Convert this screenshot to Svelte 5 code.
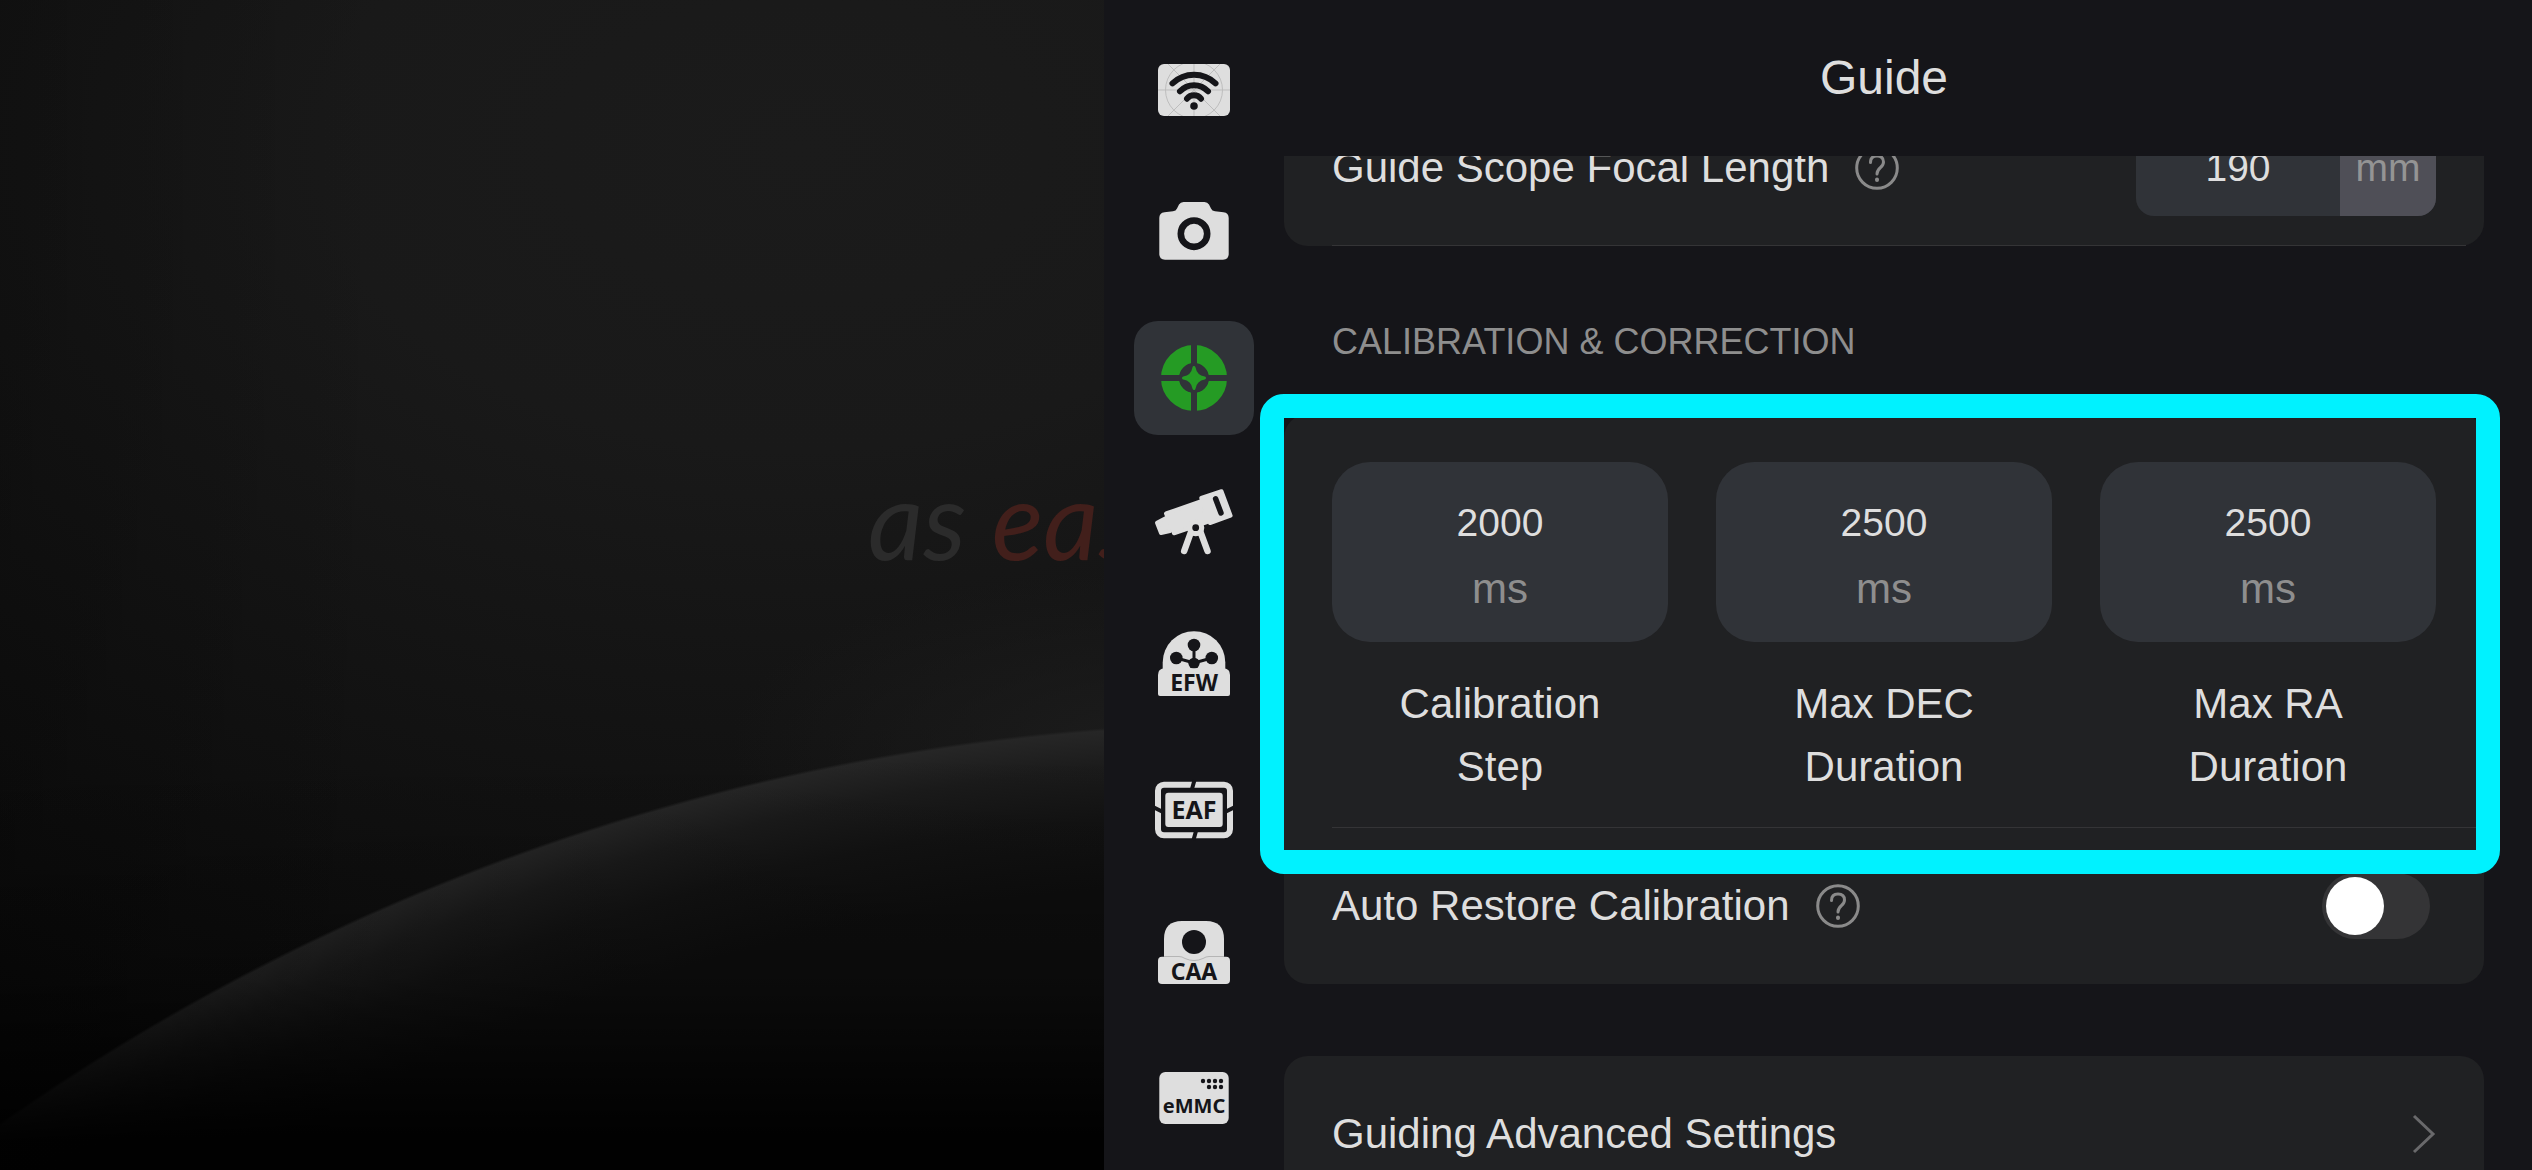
<script>
    import { onMount } from 'svelte';

    let scroller;
    let focalLength = 190;
    let autoRestore = false;
    let activeTab = 'guide';

    const tabs = [
        { id: 'wifi', label: 'Wi-Fi' },
        { id: 'camera', label: 'Main camera' },
        { id: 'guide', label: 'Guide' },
        { id: 'telescope', label: 'Telescope' },
        { id: 'efw', label: 'EFW' },
        { id: 'eaf', label: 'EAF' },
        { id: 'caa', label: 'CAA' },
        { id: 'emmc', label: 'eMMC' }
    ];

    let durations = [
        { id: 'calibration-step', value: 2000, lines: ['Calibration', 'Step'] },
        { id: 'max-dec', value: 2500, lines: ['Max DEC', 'Duration'] },
        { id: 'max-ra', value: 2500, lines: ['Max RA', 'Duration'] }
    ];

    // open with the calibration group in view
    onMount(() => {
        scroller.scrollTop = 66;
    });
</script>

<div class="shell">
    <section class="stage">
        <p class="slogan">as <span>easy</span></p>
    </section>

    <div class="panel">
        <nav>
            {#each tabs as tab (tab.id)}
                <button class="tab" class:active={activeTab === tab.id} aria-label={tab.label} on:click={() => activeTab = tab.id}>
                    <svg viewBox="0 0 84 84" class="icon">
                        {#if tab.id === 'wifi'}
                            <rect class="light" x="6" y="16" width="72" height="52" rx="6" />
                            <clipPath id="wifi-plate"><rect x="6" y="16" width="72" height="52" rx="6" /></clipPath>
                            <g class="grid-lines" clip-path="url(#wifi-plate)">
                                <circle cx="42" cy="42" r="28.5" />
                                <path d="M6 42H78M42 16V68M16 16L68 68M68 16L16 68" />
                            </g>
                            <g class="dark-line" stroke-width="6" stroke-linecap="round">
                                <path d="M20.5 35.3A31 31 0 0 1 63.5 35.3" />
                                <path d="M28 43.3A19 19 0 0 1 56 43.3" />
                                <path d="M35 50.7A9 9 0 0 1 49 50.7" />
                            </g>
                            <circle class="dark" cx="42" cy="58" r="3.8" />
                        {:else if tab.id === 'camera'}
                            <path class="light" d="M7.3 26Q7.3 20.6 12.5 20.2L21 19.3Q24 19 25 16.5L27 12.6Q28.5 10 31.5 10H52.5Q55.5 10 57 12.6L59 16.5Q60 19 63 19.3L71.5 20.2Q76.7 20.6 76.7 26V62Q76.7 67.7 71 67.7H13Q7.3 67.7 7.3 62Z" />
                            <circle class="dark-line" cx="42" cy="41.7" r="13.2" stroke-width="6.6" />
                        {:else if tab.id === 'guide'}
                            <circle class="ring" cx="42" cy="42" r="24" />
                            <path class="cross" d="M42 6V78M6 42H78" />
                            <circle class="hole" cx="42" cy="42" r="14.5" />
                            <path class="star" d="M42 31.5Q43.5 40.5 52.5 42Q43.5 43.5 42 52.5Q40.5 43.5 31.5 42Q40.5 40.5 42 31.5Z" />
                        {:else if tab.id === 'telescope'}
                            <g class="light light-line" stroke-width="4" stroke-linejoin="round">
                                <path d="M5 42.7L14 38L18 51L9 53Z" />
                                <path d="M14 33.5L50 21L55 42L22 53.3Z" />
                                <path d="M49.3 18L69.5 11.2L78.6 35.6L58 43Z" />
                            </g>
                            <path class="light-line" stroke-width="6.5" stroke-linecap="round" d="M39 52L32.2 71M48.5 52L55.5 71" />
                            <circle class="light" cx="43.7" cy="47.7" r="8.6" />
                            <path class="dark-line" stroke-width="5.5" stroke-linejoin="round" stroke-linecap="round" d="M63.6 18.8L69 33" />
                            <circle class="dark" cx="43.7" cy="47.7" r="3.4" />
                        {:else if tab.id === 'efw'}
                            <path class="light" d="M10.7 46V38.5A31.3 31.3 0 0 1 73.3 38.5V46Z" />
                            <path class="dark-line" stroke-width="3" d="M42 21V39M24.3 34L42 39L59.8 34" />
                            <g class="dark">
                                <circle cx="42" cy="21" r="6.3" />
                                <circle cx="24.3" cy="34" r="6.3" />
                                <circle cx="59.8" cy="34" r="6.3" />
                                <circle cx="42" cy="39.3" r="5.6" />
                            </g>
                            <path class="light" d="M12 44.3H72Q78 45 78 51V70Q78 72 76 72H8Q6 72 6 70V51Q6 45 12 44.3Z" />
                            <text x="42" y="67" font-size="23">EFW</text>
                        {:else if tab.id === 'eaf'}
                            <rect class="light-line" stroke-width="6" x="6" y="16.7" width="72" height="50.6" rx="6" />
                            <path class="dark-line" stroke-width="4" d="M42.5 12L40 21M44 63L41.5 72M2 39.5L10 43.5M74 43.5L82 39.5" />
                            <rect class="light" x="13.3" y="24.7" width="57.4" height="34.3" rx="3" />
                            <text x="42" y="51" font-size="25">EAF</text>
                        {:else if tab.id === 'caa'}
                            <path class="light" d="M12 46V27Q12 9 30 9H54Q72 9 72 27V46Z" />
                            <rect class="light" x="6" y="44.7" width="72" height="27.3" rx="4" />
                            <path class="seam" d="M12 44.5H27Q30 44.5 33 46.5Q42 50.5 51 46.5Q54 44.5 57 44.5H72" />
                            <circle class="dark" cx="42" cy="30" r="12" />
                            <text x="42" y="67.5" font-size="23">CAA</text>
                        {:else}
                            <rect class="light" x="7.3" y="16" width="69.4" height="52" rx="6" />
                            <g class="dark">
                                {#each [51, 57, 63, 69] as x}
                                    <circle cx={x} cy="25" r="2.2" />
                                    {#if x > 51}<circle cx={x} cy="31" r="2.2" />{/if}
                                {/each}
                            </g>
                            <text x="42" y="56.5" font-size="20">eMMC</text>
                        {/if}
                    </svg>
                </button>
            {/each}
        </nav>

        <main>
            <h1>Guide</h1>

            <div class="scroller" bind:this={scroller}>
                <div class="card">
                    <div class="row ruled">
                        <label for="focal-length">Guide Scope Focal Length</label>
                        <button class="help" aria-label="About focal length">
                            <svg viewBox="0 0 44 44">
                                <circle cx="22" cy="22" r="20.3" />
                                <path d="M15.5 16.5Q15.5 10 22 10Q28.5 10 28.5 16Q28.5 19 25.5 21.5Q22 24.5 22 28" />
                                <path class="dot" d="M22 33.5V34" />
                            </svg>
                        </button>
                        <div class="field">
                            <input id="focal-length" type="text" inputmode="numeric" bind:value={focalLength} />
                            <span>mm</span>
                        </div>
                    </div>
                </div>

                <h2>CALIBRATION &amp; CORRECTION</h2>

                <div class="card">
                    <div class="durations ruled">
                        {#each durations as item (item.id)}
                            <div class="duration">
                                <div class="tile">
                                    <input id={item.id} type="text" inputmode="numeric" bind:value={item.value} />
                                    <span>ms</span>
                                </div>
                                <label for={item.id}>{item.lines[0]}<br />{item.lines[1]}</label>
                            </div>
                        {/each}
                        <div class="highlight"></div>
                    </div>

                    <div class="row">
                        <label for="auto-restore">Auto Restore Calibration</label>
                        <button class="help" aria-label="About auto restore">
                            <svg viewBox="0 0 44 44">
                                <circle cx="22" cy="22" r="20.3" />
                                <path d="M15.5 16.5Q15.5 10 22 10Q28.5 10 28.5 16Q28.5 19 25.5 21.5Q22 24.5 22 28" />
                                <path class="dot" d="M22 33.5V34" />
                            </svg>
                        </button>
                        <input class="switch" id="auto-restore" type="checkbox" role="switch" bind:checked={autoRestore} />
                    </div>
                </div>

                <div class="card spaced">
                    <button class="row link-row">
                        Guiding Advanced Settings
                        <svg class="chevron" viewBox="0 0 24 40"><path d="M2 2L21 20L2 38" /></svg>
                    </button>
                </div>
            </div>
        </main>
    </div>
</div>

<style>
    :global(body) {
        background: #000;
    }

    .shell {
        display: grid;
        grid-template-columns: 92fr 119fr;
        height: 100vh;
        overflow: hidden;
        font-family: "Liberation Sans", Arial, sans-serif;
        font-size: 42px;
        color: #dedede;
    }

    /* night sky with the rim of a planet */
    .stage {
        display: flex;
        align-items: flex-start;
        justify-content: flex-end;
        min-width: 0;
        overflow: hidden;
        background:
            linear-gradient(to bottom, transparent 750px, rgba(0, 0, 0, 0.25) 980px, rgba(0, 0, 0, 0.95) 1140px),
            linear-gradient(to right, rgba(0, 0, 0, 0.2), transparent 400px),
            radial-gradient(circle 2201px at 50vw 2923px, #0e0e0e 2040px, #131313 2110px, #1b1b1b 2160px, #262626 2198px, transparent 2201px),
            radial-gradient(ellipse 420px 170px at 1150px 740px, #1c1c1c, transparent),
            radial-gradient(ellipse 1600px 1000px at 800px 150px, #1b1b1b, #191919 30%, #0a0a0a);
    }

    .slogan {
        margin: 458px 0 0;
        width: 236px;
        flex: none;
        font-family: Lato, sans-serif;
        font-style: italic;
        font-size: 108px;
        line-height: 120px;
        white-space: nowrap;
        color: #2b2b2b;
    }

    .slogan span {
        color: #421f1b;
    }

    .panel {
        display: flex;
        min-width: 0;
        min-height: 0;
        position: relative;
        background: #151519;
    }

    nav {
        display: flex;
        flex-direction: column;
        gap: 30px;
        flex: none;
        padding: 33px 6px 0 30px;
    }

    button {
        border: none;
        padding: 0;
        background: none;
        font: inherit;
        color: inherit;
        cursor: pointer;
    }

    .tab {
        display: flex;
        align-items: center;
        justify-content: center;
        flex: none;
        width: 120px;
        height: 114px;
        border-radius: 24px;
    }

    .tab.active {
        background: #303338;
    }

    .icon {
        width: 84px;
        height: 84px;
    }

    .light {
        fill: #dedede;
    }

    .dark {
        fill: #151519;
    }

    .light-line {
        stroke: #dedede;
    }

    .light-line:not(.light) {
        fill: none;
    }

    .dark-line {
        fill: none;
        stroke: #151519;
    }

    .grid-lines {
        fill: none;
        stroke: #bdbdbd;
        stroke-width: 1;
    }

    .seam {
        fill: none;
        stroke: #b5b5b5;
        stroke-width: 1;
    }

    .ring {
        fill: none;
        stroke: #259b24;
        stroke-width: 18;
    }

    .cross {
        stroke: #303338;
        stroke-width: 6;
    }

    .hole {
        fill: #303338;
    }

    .star {
        fill: #259b24;
        stroke: #259b24;
        stroke-width: 3;
        stroke-linejoin: round;
    }

    .icon text {
        font-family: "Noto Sans", sans-serif;
        font-weight: 700;
        text-anchor: middle;
        fill: #151519;
    }

    main {
        display: flex;
        flex-direction: column;
        flex: 1;
        min-width: 0;
    }

    h1 {
        flex: none;
        margin: 0;
        padding: 0 48px 0 24px;
        font-size: 48px;
        font-weight: 400;
        line-height: 156px;
        text-align: center;
    }

    .scroller {
        flex: 1;
        min-height: 0;
        padding: 0 48px 72px 24px;
        overflow: auto;
        scrollbar-width: none;
    }

    h2 {
        margin: 72px 48px 48px;
        font-size: 36px;
        font-weight: 400;
        line-height: 48px;
        color: #8e8e8e;
    }

    .card {
        border-radius: 24px;
        overflow: visible;
        background: #202123;
    }

    .spaced {
        margin-top: 72px;
    }

    .row {
        display: flex;
        align-items: center;
        width: 100%;
        height: 156px;
        padding: 0 48px;
        box-sizing: border-box;
    }

    .ruled {
        position: relative;
    }

    .ruled::after {
        content: "";
        position: absolute;
        left: 48px;
        right: 18px;
        bottom: 0;
        height: 1px;
        background: #343436;
    }

    .durations::after {
        right: 0;
    }

    .help {
        display: flex;
        margin-left: 26px;
    }

    .help svg {
        width: 44px;
        height: 44px;
        fill: none;
        stroke: #8a8a8a;
        stroke-width: 3;
        stroke-linecap: round;
    }

    .help .dot {
        stroke-width: 4;
    }

    input {
        margin: 0;
        border: none;
        padding: 0;
        background: none;
        outline: none;
        font: inherit;
        font-size: 39px;
        color: inherit;
        text-align: center;
    }

    .field {
        display: flex;
        width: 300px;
        height: 96px;
        margin-left: auto;
        border-radius: 18px;
        overflow: hidden;
        background: #303338;
        font-size: 39px;
        line-height: 96px;
    }

    .field input {
        flex: 1;
        min-width: 0;
    }

    .field span {
        width: 96px;
        background: #4f4f57;
        color: #949494;
        text-align: center;
    }

    .durations {
        display: grid;
        grid-template-columns: repeat(3, minmax(0, 1fr));
        gap: 48px;
        padding: 48px 48px 30px;
    }

    .duration {
        text-align: center;
    }

    .tile {
        display: flex;
        flex-direction: column;
        height: 180px;
        margin-bottom: 30px;
        padding: 28px 0 0;
        box-sizing: border-box;
        border-radius: 38px;
        background: #303338;
        line-height: 66px;
    }

    .tile input {
        width: 100%;
        height: 66px;
    }

    .tile span {
        color: #8e8e8e;
    }

    .duration label {
        display: block;
        line-height: 63px;
    }

    .highlight {
        position: absolute;
        inset: -20px -16px -46px -24px;
        z-index: 1;
        border: 24px solid #00f2ff;
        border-radius: 24px;
        pointer-events: none;
    }

    .switch {
        appearance: none;
        width: 108px;
        height: 66px;
        margin: 0 6px 0 auto;
        padding: 4px;
        box-sizing: border-box;
        border-radius: 33px;
        background: #343436;
        cursor: pointer;
    }

    .switch::before {
        content: "";
        display: block;
        width: 58px;
        height: 58px;
        border-radius: 50%;
        background: #fff;
    }

    .switch:checked {
        background: #259b24;
    }

    .switch:checked::before {
        margin-left: 42px;
    }

    .link-row {
        justify-content: space-between;
        text-align: left;
    }

    .chevron {
        width: 24px;
        height: 40px;
        fill: none;
        stroke: #69696b;
        stroke-width: 3;
    }
</style>
